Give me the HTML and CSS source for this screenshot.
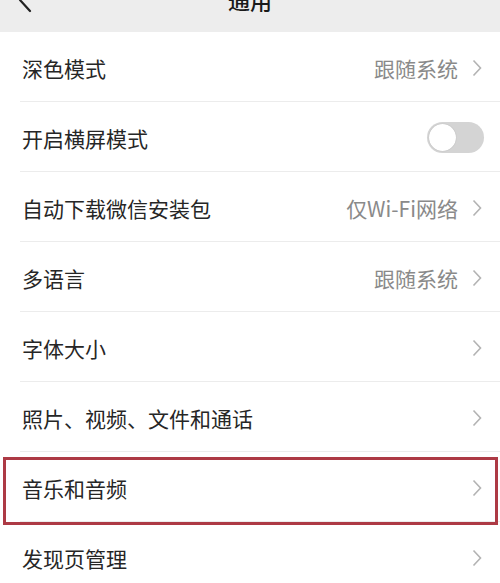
FILE: index.html
```html
<!DOCTYPE html>
<html lang="zh-CN">
<head>
<meta charset="utf-8">
<title>通用</title>
<link rel="stylesheet" href="styles.css">
</head>
<body>
<div class="page">
  <header class="header">
    <div class="back">
      <svg width="16" height="24" viewBox="0 0 16 24"><path d="M12 -10 L2 0 L12 11" fill="none" stroke="#222" stroke-width="2.2" stroke-linecap="round" stroke-linejoin="round"/></svg>
    </div>
    <div class="title">通用</div>
    <div class="spacer"></div>
  </header>
  <main class="list">
    <div class="row"><div class="inner"><span class="label">深色模式</span><span class="value">跟随系统</span><svg class="chev" width="10" height="18" viewBox="0 0 10 18"><path d="M1.5 1.5 L8.5 9 L1.5 16.5" fill="none" stroke="#b3b3b3" stroke-width="1.6"/></svg></div></div>
    <div class="row"><div class="inner"><span class="label">开启横屏模式</span><span class="toggle"><span class="knob"></span></span></div></div>
    <div class="row"><div class="inner"><span class="label">自动下载微信安装包</span><span class="value">仅Wi-Fi网络</span><svg class="chev" width="10" height="18" viewBox="0 0 10 18"><path d="M1.5 1.5 L8.5 9 L1.5 16.5" fill="none" stroke="#b3b3b3" stroke-width="1.6"/></svg></div></div>
    <div class="row"><div class="inner"><span class="label">多语言</span><span class="value">跟随系统</span><svg class="chev" width="10" height="18" viewBox="0 0 10 18"><path d="M1.5 1.5 L8.5 9 L1.5 16.5" fill="none" stroke="#b3b3b3" stroke-width="1.6"/></svg></div></div>
    <div class="row"><div class="inner"><span class="label">字体大小</span><svg class="chev" width="10" height="18" viewBox="0 0 10 18"><path d="M1.5 1.5 L8.5 9 L1.5 16.5" fill="none" stroke="#b3b3b3" stroke-width="1.6"/></svg></div></div>
    <div class="row"><div class="inner"><span class="label">照片、视频、文件和通话</span><svg class="chev" width="10" height="18" viewBox="0 0 10 18"><path d="M1.5 1.5 L8.5 9 L1.5 16.5" fill="none" stroke="#b3b3b3" stroke-width="1.6"/></svg></div></div>
    <div class="row highlight"><div class="inner"><span class="label">音乐和音频</span><svg class="chev" width="10" height="18" viewBox="0 0 10 18"><path d="M1.5 1.5 L8.5 9 L1.5 16.5" fill="none" stroke="#b3b3b3" stroke-width="1.6"/></svg></div></div>
    <div class="row"><div class="inner"><span class="label">发现页管理</span><svg class="chev" width="10" height="18" viewBox="0 0 10 18"><path d="M1.5 1.5 L8.5 9 L1.5 16.5" fill="none" stroke="#b3b3b3" stroke-width="1.6"/></svg></div></div>
  </main>
</div>
</body>
</html>
```
FILE: styles.css
```css
html, body {
  margin: 0;
  padding: 0;
  background: #ffffff;
}
body {
  font-family: "Noto Sans CJK SC", "Noto Sans", sans-serif;
  color: #262626;
  overflow: hidden;
}
.page {
  width: 500px;
  height: 583px;
  overflow: hidden;
  background: #fff;
}
.header {
  height: 32px;
  background: #ededed;
  display: grid;
  grid-template-columns: 1fr auto 1fr;
  align-items: start;
  overflow: hidden;
}
.back {
  padding-left: 18px;
  height: 32px;
}
.back svg {
  display: block;
}
.title {
  font-size: 22px;
  line-height: 26px;
  margin-top: -14px;
  font-weight: 500;
  color: #1a1a1a;
}
.list {
  display: flex;
  flex-direction: column;
}
.row {
  padding-left: 20px;
  height: 70px;
  box-sizing: border-box;
}
.inner {
  height: 70px;
  box-sizing: border-box;
  border-bottom: 1px solid #ececec;
  display: flex;
  align-items: center;
  padding-left: 2px;
  padding-right: 18px;
  padding-top: 2px;
}
.label {
  flex: 1;
  font-size: 21px;
  color: #262626;
}
.value {
  font-size: 21px;
  color: #8a8a8a;
  margin-right: 14px;
}
.chev {
  display: block;
}
.toggle {
  width: 57px;
  height: 31px;
  border-radius: 16px;
  background: #d4d4d4;
  display: flex;
  align-items: center;
  padding: 0 2px;
  box-sizing: border-box;
  margin-right: -2px;
}
.knob {
  width: 27px;
  height: 27px;
  border-radius: 50%;
  background: #fff;
  box-shadow: 0 0 1px rgba(0,0,0,0.25);
}
.highlight {
  position: relative;
}
.highlight::before {
  content: "";
  position: absolute;
  left: 3px;
  right: 2px;
  top: 5px;
  bottom: -3px;
  border: 3px solid #ad3a45;
  pointer-events: none;
}
```
